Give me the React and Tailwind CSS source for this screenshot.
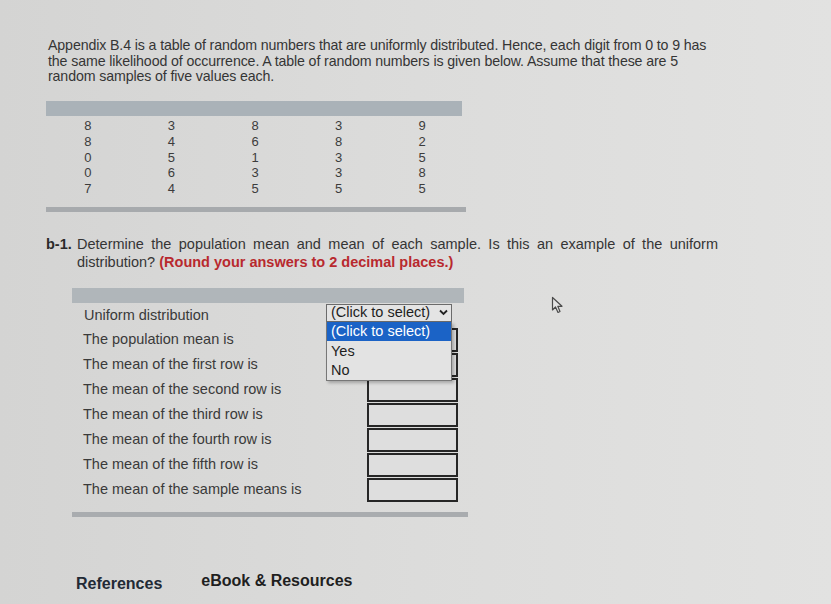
import React from "react";

const rows = [
  [8, 3, 8, 3, 9],
  [8, 4, 6, 8, 2],
  [0, 5, 1, 3, 5],
  [0, 6, 3, 3, 8],
  [7, 4, 5, 5, 5],
];

const labels = [
  "The population mean is",
  "The mean of the first row is",
  "The mean of the second row is",
  "The mean of the third row is",
  "The mean of the fourth row is",
  "The mean of the fifth row is",
  "The mean of the sample means is",
];

export default function App() {
  return (
    <div className="relative w-[831px] h-[604px] overflow-hidden bg-gradient-to-r from-[#d4d4d3] via-[#dcdcdb] to-[#e2e2e1] font-['Liberation_Sans',Arial,sans-serif] text-[#353535]">
      <div className="pl-[48px] pt-[38px]">
        <p className="w-[700px] text-[14.2px] leading-[15.7px] tracking-[-0.12px]">
          Appendix B.4 is a table of random numbers that are uniformly distributed. Hence, each digit from 0 to 9 has
          <br />
          the same likelihood of occurrence. A table of random numbers is given below. Assume that these are 5
          <br />
          random samples of five values each.
        </p>

        <div className="ml-[-2px] mt-[16px] w-[418px]">
          <div className="h-[15px] w-[416px] bg-[#aab2b8]" />
          <div className="grid grid-cols-5 pt-[2px] text-[13px] leading-[15.7px] text-[#3c3c3c]">
            {rows.map((r, i) =>
              r.map((v, j) => (
                <div key={i + "-" + j} className="text-center">
                  {v}
                </div>
              ))
            )}
          </div>
          <div className="mt-[10px] h-[5px] w-[420px] bg-[#a7aaad]" />
        </div>

        <div className="ml-[-2px] mt-[23px] flex w-[672px] text-[14.5px] leading-[18px]">
          <span className="w-[31px] shrink-0 font-bold text-[#2a2a2a]">b-1.</span>
          <div className="w-[641px]">
            <p className="text-justify [text-align-last:justify]">
              Determine the population mean and mean of each sample. Is this an example of the uniform
            </p>
            <p>
              distribution? <span className="font-bold text-[#b8292e]">(Round your answers to 2 decimal places.)</span>
            </p>
          </div>
        </div>

        <div className="relative ml-[24px] mt-[17px] w-[396px]">
          <div className="h-[15px] w-[392px] bg-[#b0b6ba]" />
          <div className="flex flex-col text-[14.5px] text-[#3a3a3a]">
            <div className="flex h-[25px] items-center justify-between pl-[12px]">
              <span className="pt-[2px]">Uniform distribution</span>
            </div>
            {labels.map((l) => (
              <div key={l} className="flex h-[25px] items-center justify-between pl-[11px]">
                <span>{l}</span>
                <div className="mr-[10px] h-[24px] w-[91px] border-2 border-[#262626] bg-[#dedede]" />
              </div>
            ))}
          </div>
          <div className="mt-[9px] h-[5px] w-[396px] bg-[#a9acaf]" />

          <div className="absolute left-[254px] top-[16px] w-[126px] text-[14.5px] text-[#1e1e1e]">
            <div className="flex h-[18px] items-center justify-between border border-[#6b6b6b] bg-[#e4e4e4] pl-[4px] pr-[3px] leading-none">
              <span>(Click to select)</span>
              <svg width="9" height="7" viewBox="0 0 9 7">
                <path d="M1 1.5 L4.5 5 L8 1.5" fill="none" stroke="#222" strokeWidth="1.8" />
              </svg>
            </div>
            <div className="border border-t-0 border-[#777] bg-[#e3e3e3] pb-[1px] shadow-[2px_2px_3px_rgba(0,0,0,0.25)]">
              <div className="h-[19px] bg-[#1b63c6] pl-[4px] leading-[19px] text-white">(Click to select)</div>
              <div className="h-[19px] pl-[4px] leading-[21px]">Yes</div>
              <div className="h-[19px] pl-[4px] leading-[20px]">No</div>
            </div>
          </div>
        </div>

        <div className="ml-[28px] mt-[52px] flex items-end gap-[39px] text-[16px] font-bold text-[#222a35]">
          <span className="translate-y-[3px]">References</span>
          <span className="text-[#1f1f1f]">eBook &amp; Resources</span>
        </div>
      </div>

      <svg className="absolute left-[551px] top-[296px]" width="14" height="18" viewBox="0 0 14 18">
        <path d="M1.5 1.5 L1.5 14 L4.5 11 L7 16.5 L9 15.5 L6.8 10.3 L11 10.3 Z" fill="#e4e4e4" stroke="#4a4a4a" strokeWidth="1.2" strokeLinejoin="round" />
      </svg>
    </div>
  );
}
